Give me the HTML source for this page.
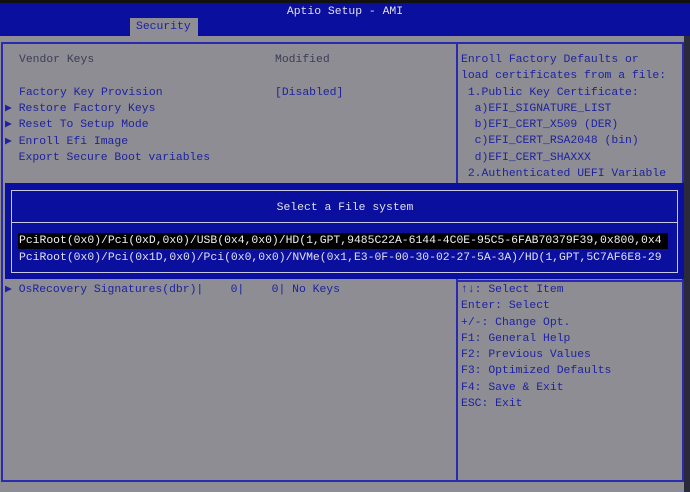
<html><head><style>
body{margin:0;width:690px;height:492px;background:#8d8d93;position:relative;overflow:hidden;font-family:"Liberation Mono","DejaVu Sans Mono",monospace;font-size:11.4px;}
.a{position:absolute;white-space:pre;line-height:16.3px}
.b{color:#1e22a0}
.d{color:#3c3c58}
</style></head><body>
<div style="position:absolute;left:0;top:0;width:690px;height:3px;background:#111"></div>
<div style="position:absolute;left:0;top:3px;width:690px;height:33px;background:#0b0f9e"></div>
<div class="a" style="left:0;width:690px;top:4px;text-align:center;color:#e0e0e8">Aptio Setup - AMI</div>
<div style="position:absolute;left:130px;top:18px;width:68px;height:18px;background:#8d8d93"></div>
<div class="a" style="left:136px;top:19px;color:#1e22a0">Security</div>
<div style="position:absolute;left:1px;top:42px;width:683px;height:440px;border:2px solid #2a2ab0;box-sizing:border-box"></div>
<div style="position:absolute;left:456px;top:42px;width:2px;height:440px;background:#2a2ab0"></div>
<div style="position:absolute;left:456px;top:280px;width:228px;height:2px;background:#2a2ab0"></div>
<div style="position:absolute;left:684px;top:36px;width:6px;height:456px;background:#2a2a3a"></div>
<div class="a d" style="left:19px;top:52px">Vendor Keys</div>
<div class="a d" style="left:275px;top:52px">Modified</div>
<div class="a b" style="left:19px;top:85px">Factory Key Provision</div>
<div class="a b" style="left:275px;top:85px">[Disabled]</div>
<div class="a b" style="left:5px;top:101px">▶ Restore Factory Keys
▶ Reset To Setup Mode
▶ Enroll Efi Image
  Export Secure Boot variables</div>
<div class="a b" style="left:5px;top:282px">▶ OsRecovery Signatures(dbr)|    0|    0| No Keys</div>
<div class="a b" style="left:461px;top:52px">Enroll Factory Defaults or
load certificates from a file:
 1.Public Key Certificate:
  a)EFI_SIGNATURE_LIST
  b)EFI_CERT_X509 (DER)
  c)EFI_CERT_RSA2048 (bin)
  d)EFI_CERT_SHAXXX
 2.Authenticated UEFI Variable</div>
<div class="a b" style="left:461px;top:282px">↑↓: Select Item
Enter: Select
+/-: Change Opt.
F1: General Help
F2: Previous Values
F3: Optimized Defaults
F4: Save &amp; Exit
ESC: Exit</div>
<div style="position:absolute;left:5px;top:183px;width:679px;height:96px;background:#0b0f9e"></div>
<div style="position:absolute;left:11px;top:190px;width:667px;height:83px;border:1px solid #c8c8e0;box-sizing:border-box"></div>
<div style="position:absolute;left:12px;top:222px;width:665px;height:1px;background:#c8c8e0"></div>
<div class="a" style="left:0;width:690px;text-align:center;top:200px;color:#e0e0e8">Select a File system</div>
<div style="position:absolute;left:18px;top:233px;width:650px;height:16px;background:#000"></div>
<div class="a" style="left:19px;top:233px;color:#f0f0f0;width:650px;overflow:hidden">PciRoot(0x0)/Pci(0xD,0x0)/USB(0x4,0x0)/HD(1,GPT,9485C22A-6144-4C0E-95C5-6FAB70379F39,0x800,0x4</div>
<div class="a" style="left:19px;top:250px;color:#e0e0e8;width:650px;overflow:hidden">PciRoot(0x0)/Pci(0x1D,0x0)/Pci(0x0,0x0)/NVMe(0x1,E3-0F-00-30-02-27-5A-3A)/HD(1,GPT,5C7AF6E8-29</div>
</body></html>
